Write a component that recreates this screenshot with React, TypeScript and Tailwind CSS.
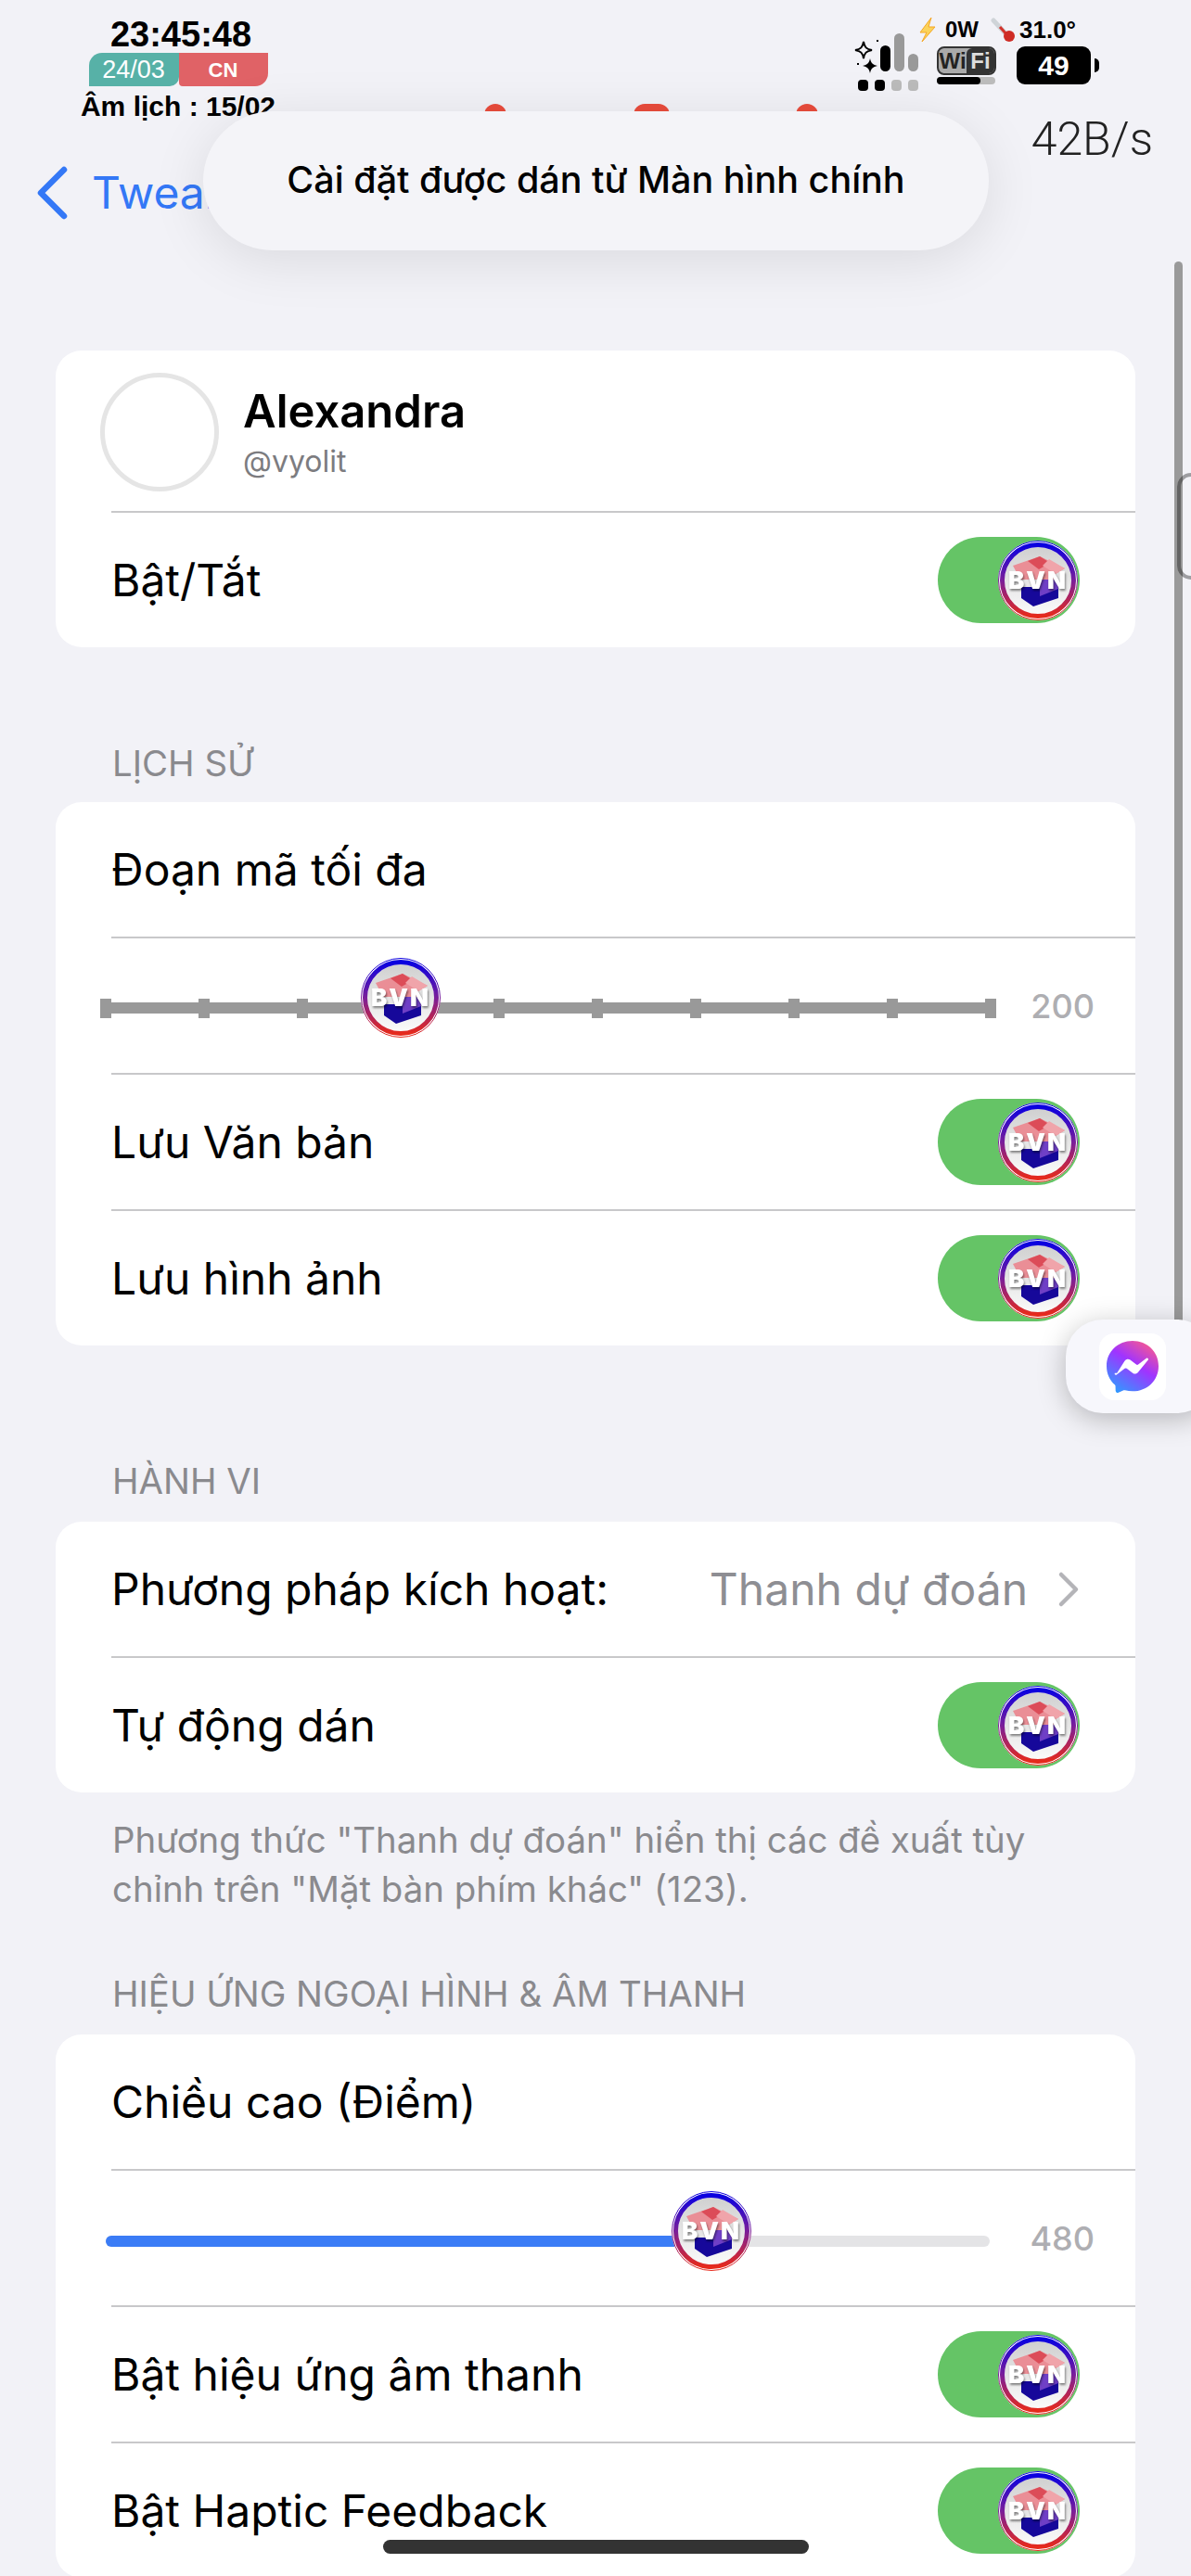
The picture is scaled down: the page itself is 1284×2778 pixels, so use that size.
import React, { useId } from 'react';

const BvnThumb: React.FC<{ className?: string }> = ({ className = '' }) => {
    const id = useId();
    return (
        <svg viewBox="0 0 86 86" className={`w-[86px] h-[86px] ${className}`}>
            <defs>
                <linearGradient id={`${id}ring`} x1="0" y1="0" x2="0" y2="1">
                    <stop offset="0" stopColor="#0a00e0" />
                    <stop offset="0.5" stopColor="#7a1e9a" />
                    <stop offset="1" stopColor="#e62a1c" />
                </linearGradient>
                <linearGradient id={`${id}face`} x1="0" y1="0" x2="0" y2="1">
                    <stop offset="0" stopColor="#d0d0d0" />
                    <stop offset="1" stopColor="#fafafa" />
                </linearGradient>
            </defs>
            <circle cx="43" cy="43" r="43" fill="#fff" />
            <circle cx="43" cy="43" r="42.5" fill="none" stroke={`url(#${id}ring)`} strokeWidth="1" />
            <circle cx="43" cy="43" r="36" fill={`url(#${id}face)`} />
            <circle cx="43" cy="43" r="38.5" fill="none" stroke={`url(#${id}ring)`} strokeWidth="5" />
            <polygon points="16,27 45,17 72,30 62,36 62,42 24,42" fill="#ea8e96" />
            <polygon points="32,22 45,17 56,24 44,31" fill="#dc4c58" />
            <polygon points="55,20 72,30 62,36 48,27" fill="#f0a4aa" />
            <polygon points="25,50 45,50 65,50 65,62 38,71 25,62" fill="#16089a" />
            <polygon points="45,42 65,42 65,52 45,60" fill="#6f3fc6" />
            <text x="43" y="52" textAnchor="middle" fontFamily="Inter, sans-serif" fontWeight="900" fontSize="26" letterSpacing="2" fill="#fff" className="drop-shadow-[1px_2px_1px_rgba(0,0,0,0.45)]">BVN</text>
        </svg>
    );
};

const Toggle: React.FC = () => (
    <div className="w-[153px] h-[93px] rounded-full bg-[#65c466] flex items-center justify-end pr-[2px]">
        <BvnThumb />
    </div>
);

const Separator: React.FC = () => <div className="h-[2px] ml-[60px] bg-[#c8c8ca]" />;

const Row: React.FC<{ children: React.ReactNode }> = ({ children }) => (
    <div className="h-[145px] pl-[60px] pr-[60px] flex items-center justify-between text-[48px] text-black">
        {children}
    </div>
);

const ToggleRow: React.FC<{ label: string }> = ({ label }) => (
    <Row>
        <span className="mt-[1px]">{label}</span>
        <Toggle />
    </Row>
);

const SectionLabel: React.FC<{ children: React.ReactNode; className: string }> = ({ children, className }) => (
    <div className={`pl-[121px] text-[38.4px] leading-[44px] text-[#8a8a8e] ${className}`}>{children}</div>
);

const Card: React.FC<{ children: React.ReactNode }> = ({ children }) => (
    <div className="mx-[60px] bg-white rounded-[28px]">{children}</div>
);

const StatusGlyphs: React.FC = () => (
    <svg viewBox="0 0 70 62" className="w-[70px] h-[62px]">
        <path d="M11 9c1 6 3 8 9 9-6 1-8 3-9 9-1-6-3-8-9-9 6-1 8-3 9-9z" fill="none" stroke="#000" strokeWidth="2" />
        <path d="M18 27c1 5 3 7 8 8-5 1-7 3-8 8-1-5-3-7-8-8 5-1 7-3 8-8z" fill="#000" />
        <rect x="25" y="7" width="2" height="2" fill="#000" />
        <rect x="4" y="32" width="2" height="2" fill="#000" />
        <rect x="29" y="13" width="11" height="28" rx="5.5" fill="#000" />
        <rect x="44" y="0" width="11" height="41" rx="5.5" fill="#999" />
        <rect x="59" y="22" width="11" height="19" rx="5.5" fill="#999" />
        <rect x="5" y="50" width="11" height="12" rx="4" fill="#000" />
        <rect x="23" y="50" width="11" height="12" rx="4" fill="#000" />
        <rect x="41" y="50" width="11" height="12" rx="4" fill="#bbb" />
        <rect x="59" y="50" width="11" height="12" rx="4" fill="#bbb" />
    </svg>
);

const Lightning: React.FC = () => (
    <svg viewBox="0 0 20 28" className="w-[20px] h-[28px]">
        <path d="M14 1 2 17h7l-5 10L18 11h-7l3-10z" fill="#fbd35a" stroke="#f5a623" strokeWidth="1" />
    </svg>
);

const Thermometer: React.FC = () => (
    <svg viewBox="0 0 27 27" className="w-[27px] h-[27px]">
        <line x1="3" y1="3" x2="16" y2="17" stroke="#cfd4d8" strokeWidth="5" strokeLinecap="round" />
        <line x1="10" y1="10" x2="18" y2="19" stroke="#d3342c" strokeWidth="3" />
        <circle cx="20" cy="20" r="6" fill="#cf2c25" />
    </svg>
);

const Messenger: React.FC = () => (
    <svg viewBox="0 0 24 24" className="w-[56px] h-[56px]">
        <defs>
            <linearGradient id="messenger" x1="0.2" y1="1" x2="0.85" y2="0">
                <stop offset="0" stopColor="#2f9bff" />
                <stop offset="0.55" stopColor="#a033ff" />
                <stop offset="1" stopColor="#ff5c87" />
            </linearGradient>
        </defs>
        <path d="M12 0C5.24 0 0 4.952 0 11.64c0 3.499 1.434 6.521 3.769 8.61a.96.96 0 0 1 .323.683l.065 2.135a.96.96 0 0 0 1.347.85l2.381-1.053a.96.96 0 0 1 .641-.046A13 13 0 0 0 12 23.28c6.76 0 12-4.952 12-11.64S18.76 0 12 0" fill="url(#messenger)" />
        <path d="M4.8 14.9l3.525-5.59a1.8 1.8 0 0 1 2.6-.48l2.8 2.1a.72.72 0 0 0 .868-.003l3.786-2.873c.505-.383 1.164.221.825.758L14.68 14.4a1.8 1.8 0 0 1-2.6.48l-2.8-2.1a.72.72 0 0 0-.868.003l-3.786 2.873c-.505.383-1.164-.221-.826-.756" fill="#fff" />
    </svg>
);

const App: React.FC = () => {
    const ticks = [0, 1, 2, 3, 4, 5, 6, 7, 8, 9];

    return (
        <div className="relative h-[2778px] overflow-hidden bg-[#f2f2f7] font-[Inter,sans-serif]">
            {/* Status bar and nav */}
            <header className="h-[378px] flex justify-between">
                <div className="pl-[40px]">
                    <div className="ml-[48px] w-[208px] flex flex-col items-center pt-[16px] font-['Liberation_Sans',sans-serif] font-bold text-black">
                        <span className="text-[38px] leading-[42px] ml-[6px]">23:45:48</span>
                        <div className="flex mt-[-1px] text-white">
                            <span className="w-[97px] h-[36px] bg-[#57b1a7] rounded-tl-[14px] rounded-br-[10px] flex items-center justify-center text-[27px] font-normal">24/03</span>
                            <span className="w-[96px] h-[36px] bg-[#e06266] rounded-bl-[4px] rounded-br-[14px] flex items-center justify-center text-[22px]">CN</span>
                        </div>
                        <span className="text-[30px] leading-[38px] mt-[3px] whitespace-nowrap">Âm lịch : 15/02</span>
                    </div>
                    <div className="flex items-center gap-[26px] mt-[38px]">
                        <svg viewBox="0 0 33 58" className="w-[33px] h-[58px]">
                            <path d="M29 4 4 29l25 25" fill="none" stroke="#3478f6" strokeWidth="6.5" strokeLinecap="round" strokeLinejoin="round" />
                        </svg>
                        <span className="text-[48px] text-[#3478f6]">Tweak</span>
                    </div>
                </div>
                <div className="pr-[41px] flex flex-col items-end">
                    <div className="flex items-start pt-[18px] pr-[67px]">
                        <div className="mt-[18px]">
                            <StatusGlyphs />
                        </div>
                        <div className="font-['Liberation_Sans',sans-serif] font-bold text-black">
                            <div className="flex items-center h-[28px] text-[24px]">
                                <span className="mr-[9px]"><Lightning /></span>
                                <span className="w-[49px]">0W</span>
                                <Thermometer />
                                <span className="ml-[4px] text-[26px]">31.0°</span>
                            </div>
                            <div className="flex mt-[4px] pl-[20px]">
                                <div>
                                    <div className="w-[64px] h-[31px] rounded-[8px] border-2 border-[#333] bg-[#aaa] flex overflow-hidden text-[24px] leading-[27px]">
                                        <span className="w-[30px] text-center text-[#222]">Wi</span>
                                        <span className="flex-1 text-center rounded-tl-[6px] bg-[#333] text-[#ddd]">Fi</span>
                                    </div>
                                    <div className="w-[63px] h-[8px] mt-[2px] rounded-full bg-[#bbb]">
                                        <div className="w-[47px] h-[8px] rounded-full bg-black" />
                                    </div>
                                </div>
                                <div className="relative ml-[22px] w-[80px] h-[41px] rounded-[9px] bg-black text-white text-[30px] flex items-center justify-center">
                                    49
                                    <span className="absolute right-[-9px] top-[13px] w-[5px] h-[15px] rounded-r-full bg-black" />
                                </div>
                            </div>
                        </div>
                    </div>
                    <span className="mt-[24px] text-[50px] leading-[56px] font-light text-[#222] font-[Roboto,sans-serif]">42B/s</span>
                </div>
            </header>

            {/* Profile */}
            <Card>
                <div className="h-[173px] pl-[48px] flex items-center gap-[26px] pt-[2px]">
                    <div className="w-[128px] h-[128px] rounded-full border-[5px] border-[#e5e5e5] bg-white" />
                    <div className="flex flex-col mt-[2px]">
                        <span className="text-[49px] leading-[56px] font-semibold text-black">Alexandra</span>
                        <span className="text-[32px] leading-[40px] mt-[6px] text-[#7c7c80]">@vyolit</span>
                    </div>
                </div>
                <Separator />
                <ToggleRow label="Bật/Tắt" />
            </Card>

            <SectionLabel className="mt-[103px] mb-[20px]">LỊCH SỬ</SectionLabel>
            <Card>
                <Row><span className="mt-[1px]">Đoạn mã tối đa</span></Row>
                <Separator />
                <div className="h-[145px] pl-[48px] pr-[44px] flex items-center justify-between">
                    <div className="relative w-[966px] h-[21px] mt-[6px] flex justify-between items-center">
                        <div className="absolute left-0 right-0 top-[4px] h-[12px] bg-[#999]" />
                        {ticks.map(t => (
                            <div key={t} className="relative w-[12px] h-[21px] bg-[#999]" />
                        ))}
                        <BvnThumb className="absolute left-[281px] top-[-44px]" />
                    </div>
                    <span className="text-[36px] font-medium text-[#aeaeb2]">200</span>
                </div>
                <Separator />
                <ToggleRow label="Lưu Văn bản" />
                <Separator />
                <ToggleRow label="Lưu hình ảnh" />
            </Card>

            <SectionLabel className="mt-[124px] mb-[22px]">HÀNH VI</SectionLabel>
            <Card>
                <Row>
                    <span className="mt-[1px]">Phương pháp kích hoạt:</span>
                    <span className="flex items-center gap-[32px] text-[#8e8e93]">
                        <span className="mt-[1px]">Thanh dự đoán</span>
                        <svg viewBox="0 0 24 40" className="w-[24px] h-[40px]">
                            <path d="M4 4l16 16L4 36" fill="none" stroke="#b4b4b8" strokeWidth="4.5" strokeLinecap="round" strokeLinejoin="round" />
                        </svg>
                    </span>
                </Row>
                <Separator />
                <ToggleRow label="Tự động dán" />
            </Card>
            <p className="pl-[121px] pr-[150px] mt-[25px] text-[38.4px] leading-[53px] text-[#8a8a8e]">
                Phương thức "Thanh dự đoán" hiển thị các đề xuất tùy chỉnh trên "Mặt bàn phím khác" (123).
            </p>

            <SectionLabel className="mt-[64px] mb-[22px]">HIỆU ỨNG NGOẠI HÌNH &amp; ÂM THANH</SectionLabel>
            <Card>
                <Row><span className="mt-[1px]">Chiều cao (Điểm)</span></Row>
                <Separator />
                <div className="h-[145px] pl-[54px] pr-[44px] flex items-center justify-between">
                    <div className="relative w-[953px] h-[12px] mt-[6px] rounded-full bg-[#e4e4e6]">
                        <div className="w-[640px] h-[12px] rounded-l-full bg-[#3b7cf6]" />
                        <BvnThumb className="absolute left-[610px] top-[-48px]" />
                    </div>
                    <span className="text-[36px] font-medium text-[#aeaeb2]">480</span>
                </div>
                <Separator />
                <ToggleRow label="Bật hiệu ứng âm thanh" />
                <Separator />
                <ToggleRow label="Bật Haptic Feedback" />
            </Card>

            {/* Toast from the clipboard, covers the app icons badges */}
            <div className="absolute left-[522px] top-[112px] w-[24px] h-[24px] rounded-full bg-[#ea4c3c]" />
            <div className="absolute left-[683px] top-[112px] w-[39px] h-[24px] rounded-full bg-[#ea4c3c]" />
            <div className="absolute left-[858px] top-[112px] w-[24px] h-[24px] rounded-full bg-[#ea4c3c]" />
            <div className="absolute left-[219px] top-[120px] w-[847px] h-[150px] rounded-full bg-[#f4f4f8] shadow-[0_10px_60px_rgba(0,0,0,0.1)] flex items-center justify-center text-[39.5px] font-medium text-black">
                Cài đặt được dán từ Màn hình chính
            </div>

            {/* Scroll bar, side handle, floating messenger, home indicator */}
            <div className="absolute left-[1266px] top-[282px] w-[9px] h-[1160px] rounded-t-full bg-[#9a9a9a]" />
            <div className="absolute left-[1269px] top-[510px] w-[30px] h-[115px] rounded-[20px] border-[4px] border-[rgba(0,0,0,0.35)]" />
            <div className="absolute left-[1149px] top-[1423px] w-[160px] h-[101px] rounded-[40px] bg-[#f7f7fc] shadow-[0_6px_30px_rgba(0,0,0,0.25)] pl-[36px] pt-[15px]">
                <div className="w-[72px] h-[72px] rounded-[16px] bg-white flex items-center justify-center">
                    <Messenger />
                </div>
            </div>
            <div className="absolute left-[413px] top-[2739px] w-[459px] h-[15px] rounded-full bg-[#333]" />
        </div>
    );
};

export default App;
